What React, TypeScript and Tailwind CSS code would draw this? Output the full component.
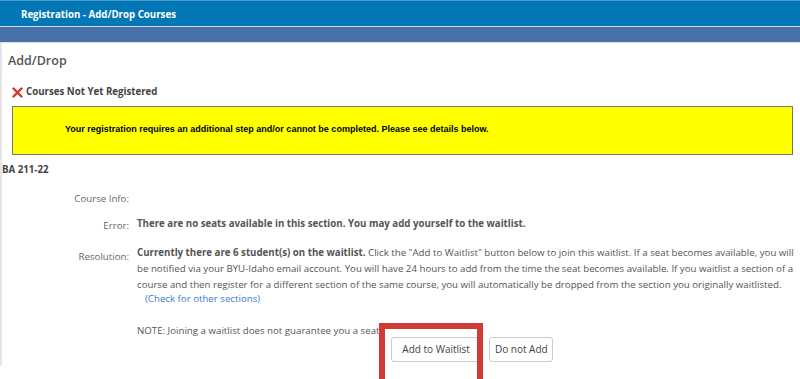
import React from "react";

const RedX: React.FC = () => (
  <svg width="11" height="11" viewBox="0 0 11 11" className="shrink-0">
    <path d="M1.5 1.5 L9.5 9.5" stroke="#d8322e" strokeWidth="2.4" strokeLinecap="round" />
    <path d="M9.5 1.5 L1.5 9.5" stroke="#d8322e" strokeWidth="2.4" strokeLinecap="round" />
  </svg>
);

export default function App() {
  return (
    <div className="w-[800px] h-[379px] overflow-hidden bg-white font-['Open_Sans',sans-serif] text-[#555]">
      {/* Title bar */}
      <div className="h-[26px] bg-[#0277b6] border-t border-[#4d9bd0] flex items-center pl-[21px] pt-[3px]">
        <span className="text-white text-[9.7px] font-bold">Registration - Add/Drop Courses</span>
      </div>
      <div className="h-[17px] bg-[#4a70a9] border-t border-[#a9c6e2] border-b border-[#d0deee]" />

      {/* Panel */}
      <div className="border-l-2 border-[#e6e6e6] h-[323px] pt-[10px]">
        <h1 className="pl-[6px] text-[12.5px] font-semibold text-[#555] leading-[16px]">Add/Drop</h1>

        <div className="flex items-center gap-[3px] pl-[10px] mt-[16px]">
          <RedX />
          <span className="text-[9.7px] font-bold text-[#444]">Courses Not Yet Registered</span>
        </div>

        <div className="ml-[10px] mr-[7px] mt-[6px] h-[49px] bg-[#ffff00] border border-[#777] flex items-center pl-[52px]">
          <span className="font-['Liberation_Sans',Arial,sans-serif] text-[9px] font-bold text-black">
            Your registration requires an additional step and/or cannot be completed. Please see details below.
          </span>
        </div>

        <div className="mt-[8px] text-[9.7px] font-bold text-[#444] leading-[14px]">BA 211-22</div>

        <div className="grid grid-cols-[127px_1fr] gap-x-[8px] text-[9.7px] leading-[16px] pr-[3px]">
          <div className="text-right text-[#666] mt-[14px]">Course Info:</div>
          <div className="mt-[14px]" />

          <div className="text-right text-[#666] mt-[9px] pt-[2px]">Error:</div>
          <div className="mt-[9px] font-bold">
            There are no seats available in this section. You may add yourself to the waitlist.
          </div>

          <div className="text-right text-[#666] mt-[11px] pt-[4px]">Resolution:</div>
          <div className="mt-[11px]">
            <p>
              <span className="font-bold">Currently there are 6 student(s) on the waitlist.</span> Click the "Add to
              Waitlist" button below to join this waitlist. If a seat becomes available, you will be notified via your
              BYU-Idaho email account. You will have 24 hours to add from the time the seat becomes available. If you
              waitlist a section of a course and then register for a different section of the same course, you will
              automatically be dropped from the section you originally waitlisted.
            </p>
            <a className="block pl-[8px] mt-[-2px] text-[#3d7cc9]">(Check for other sections)</a>
            <p className="mt-[16px]">NOTE: Joining a waitlist does not guarantee you a seat.</p>
            <div className="flex justify-center gap-[8px] mt-[-2px] pl-[10px]">
              <div className="relative">
                <button className="h-[25px] px-[10.5px] border border-[#ccc] rounded-[3px] bg-white text-[#444] text-[10px]">
                  Add to Waitlist
                </button>
                <div className="absolute left-[-12px] top-[-14px] w-[104px] h-[62px] border-[6px] border-[#d23a36]" />
              </div>
              <button className="h-[25px] px-[4.5px] border border-[#ccc] rounded-[3px] bg-white text-[#444] text-[10px]">
                Do not Add
              </button>
            </div>
          </div>
        </div>
      </div>
    </div>
  );
}
